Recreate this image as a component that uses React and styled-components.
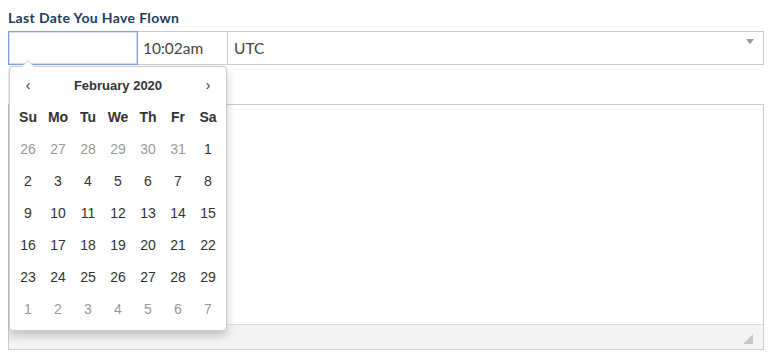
import styled, { createGlobalStyle } from "styled-components";

const GlobalStyle = createGlobalStyle`
  body {
    margin: 8px;
    background: #fff;
    font-family: "Lato", "Liberation Sans", sans-serif;
  }
`;

const Field = styled.div`
  width: 756px;
`;

const Label = styled.div`
  font-family: "Lato", "Liberation Sans", sans-serif;
  font-weight: 700;
  font-size: 14px;
  letter-spacing: 0.35px;
  line-height: 18px;
  color: #1c3d63;
  margin: 1px 0 4px 0;
`;

const InputRow = styled.div`
  display: flex;
  height: 34px;
`;

const DateWrap = styled.div`
  position: relative;
  width: 130px;
`;

const DateInput = styled.div`
  box-sizing: border-box;
  height: 34px;
  border: 1px solid #7fa2e2;
  box-shadow: inset 0 0 0 0.5px #a9c0ec;
  background: #fff;
`;

const TimeBox = styled.div`
  box-sizing: border-box;
  width: 89px;
  height: 34px;
  border-top: 1px solid #ccc;
  border-bottom: 1px solid #ccc;
  display: flex;
  align-items: center;
  padding-left: 5px;
  font-size: 15.5px;
  color: #444;
`;

const Select = styled.div`
  box-sizing: border-box;
  flex: 1;
  height: 34px;
  border: 1px solid #ccc;
  display: flex;
  justify-content: space-between;
  padding: 0 9px 0 6px;
  font-size: 15.5px;
  color: #444;
`;

const SelectText = styled.span`
  align-self: center;
`;

const Caret = styled.span`
  margin-top: 7px;
  width: 0;
  height: 0;
  border-left: 4px solid transparent;
  border-right: 4px solid transparent;
  border-top: 5px solid #999;
`;

const TextArea = styled.div`
  box-sizing: border-box;
  margin-top: 39px;
  height: 246px;
  border: 1px solid #ccc;
  display: flex;
  flex-direction: column;
`;

const TextBody = styled.div`
  flex: 1;
`;

const TextFooter = styled.div`
  box-sizing: border-box;
  height: 25px;
  background: #f4f4f4;
  border-top: 1px solid #ddd;
  display: flex;
  justify-content: flex-end;
  align-items: flex-end;
  padding: 0 10px 5px 0;
`;

const ResizeGrip = styled.span`
  width: 0;
  height: 0;
  border-left: 10px solid transparent;
  border-bottom: 10px solid #c8c8c8;
`;

const Popup = styled.div`
  position: absolute;
  top: 35px;
  left: 1px;
  width: 218px;
  box-sizing: border-box;
  padding: 2px 4px 5px 3px;
  background: #fff;
  border: 1px solid #ccc;
  border-radius: 4px;
  box-shadow: 0 5px 10px rgba(0, 0, 0, 0.2);
  font-family: "Liberation Sans", Arial, sans-serif;
  font-size: 14px;
  color: #333;
  z-index: 2;

  &::before {
    content: "";
    position: absolute;
    top: -7px;
    left: 11px;
    border-left: 7px solid transparent;
    border-right: 7px solid transparent;
    border-bottom: 7px solid #ccc;
  }
  &::after {
    content: "";
    position: absolute;
    top: -6px;
    left: 12px;
    border-left: 6px solid transparent;
    border-right: 6px solid transparent;
    border-bottom: 6px solid #fff;
  }
`;

const Grid = styled.div`
  display: grid;
  grid-template-columns: repeat(7, 30px);
  grid-auto-rows: 32px;
`;

const Cell = styled.div`
  display: flex;
  align-items: center;
  justify-content: center;
  font-weight: ${(p) => (p.$bold ? 700 : 400)};
  color: ${(p) => (p.$muted ? "#999" : "#333")};
`;

const Title = styled.div`
  grid-column: span 5;
  display: flex;
  align-items: center;
  justify-content: center;
  font-size: 13px;
  font-weight: 700;
`;

const weekDays = ["Su", "Mo", "Tu", "We", "Th", "Fr", "Sa"];

const days = [
  ...[26, 27, 28, 29, 30, 31].map((d) => ({ d, muted: true })),
  ...Array.from({ length: 29 }, (_, i) => ({ d: i + 1 })),
  ...[1, 2, 3, 4, 5, 6, 7].map((d) => ({ d, muted: true })),
];

function Calendar() {
  return (
    <Popup>
      <Grid>
        <Cell>‹</Cell>
        <Title>February 2020</Title>
        <Cell>›</Cell>
        {weekDays.map((w) => (
          <Cell key={w} $bold>
            {w}
          </Cell>
        ))}
        {days.map((day, i) => (
          <Cell key={i} $muted={day.muted}>
            {day.d}
          </Cell>
        ))}
      </Grid>
    </Popup>
  );
}

export default function App() {
  return (
    <>
      <GlobalStyle />
      <Field>
        <Label>Last Date You Have Flown</Label>
        <InputRow>
          <DateWrap>
            <DateInput />
            <Calendar />
          </DateWrap>
          <TimeBox>10:02am</TimeBox>
          <Select>
            <SelectText>UTC</SelectText>
            <Caret />
          </Select>
        </InputRow>
        <TextArea>
          <TextBody />
          <TextFooter>
            <ResizeGrip />
          </TextFooter>
        </TextArea>
      </Field>
    </>
  );
}
